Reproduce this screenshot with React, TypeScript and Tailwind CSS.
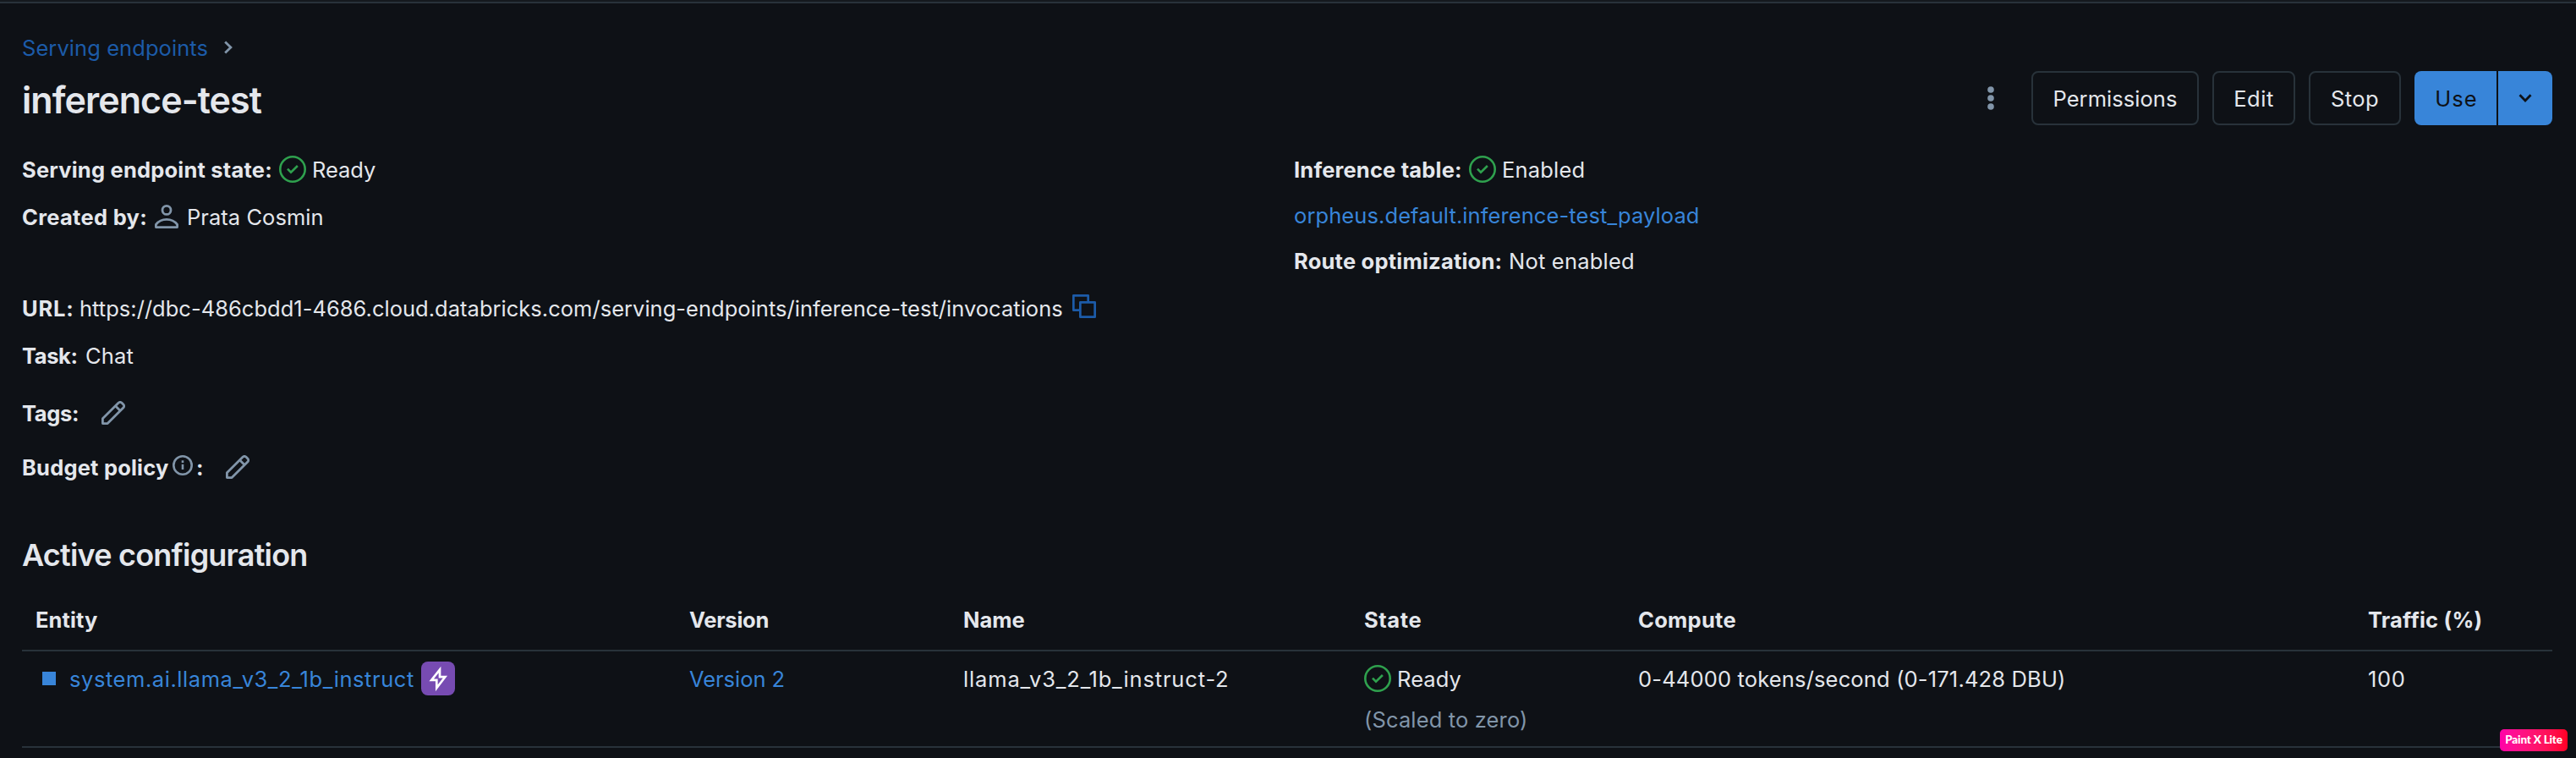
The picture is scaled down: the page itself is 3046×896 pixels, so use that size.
import type { ReactNode } from "react";

function CheckCircle() {
  return (
    <svg width="32" height="32" viewBox="0 0 32 32" fill="none" className="-mt-0.5 shrink-0 stroke-[#2fa14e]" strokeWidth="2.6">
      <circle cx="16" cy="16" r="14.7" />
      <path d="M10 15.6L14 19.6L21.9 12" />
    </svg>
  );
}

function PencilIcon() {
  return (
    <svg width="28" height="28" viewBox="0 0 28 28" fill="none" className="-mt-0.5 shrink-0 stroke-[#8195a9]" strokeWidth="2.8" strokeLinejoin="round">
      <path d="M1.4 26.6V20.8L20 2.2a2.9 2.9 0 0 1 4.1 0l1.7 1.7a2.9 2.9 0 0 1 0 4.1L7.2 26.6Z" />
      <path d="M16.4 5.8L22.2 11.6" />
    </svg>
  );
}

function UserIcon() {
  return (
    <svg width="28" height="28" viewBox="0 0 28 28" fill="none" className="-mt-0.5 shrink-0 stroke-[#8195a9]" strokeWidth="2.8" strokeLinejoin="round">
      <circle cx="14" cy="6.4" r="5" />
      <path d="M1.4 26.6V23.4C4.3 19.7 8.8 17.4 14 17.4S23.7 19.7 26.6 23.4V26.6Z" />
    </svg>
  );
}

function CopyIcon() {
  return (
    <svg width="28" height="28" viewBox="0 0 28 28" fill="none" className="-mt-1.5 ml-[11px] shrink-0 stroke-[#1c5ba8]" strokeWidth="2.7" strokeLinejoin="round">
      <path d="M9.3 18.7H1.35V1.35H18.7V9.3" />
      <path d="M9.35 9.35H26.65V26.65H9.35Z" />
    </svg>
  );
}

function InfoIcon() {
  return (
    <svg width="24" height="24" viewBox="0 0 24 24" fill="none" className="-mt-1.5 shrink-0 stroke-[#8195a9]" strokeWidth="2.6">
      <circle cx="12" cy="12" r="10.7" />
      <path d="M12 10.8V17M12 6.3V8.9" />
    </svg>
  );
}

function Row({ className, children }: { className: string; children: ReactNode }) {
  return <div className={`flex h-10 items-center ${className}`}>{children}</div>;
}

function Label({ className, children }: { className: string; children: ReactNode }) {
  return <span className={`shrink-0 font-bold ${className}`}>{children}</span>;
}

const outlineButton =
  "flex h-16 items-center justify-center rounded-lg border-2 border-[#28323a] pt-0.5";

const gridColumns = "grid grid-cols-[773px_324px_473px_325px_863px_234px]";

export default function App() {
  return (
    <div className="flex h-[896px] w-[3046px] flex-col overflow-hidden bg-[#0e1116] font-['Inter',sans-serif] text-[25.5px] leading-10 whitespace-nowrap text-[#e4e7ec]">
      <div className="h-1 shrink-0 border-b-2 border-[#28323a] bg-[#15191e]" />

      <header className="flex h-[140px] shrink-0 justify-between pr-7 pl-[26px]">
        <div>
          <nav className="mt-[33px] flex h-10 items-center text-[#1c5ba8]">
            <a className="w-[238px] tracking-[0.07px]">Serving endpoints</a>
            <svg width="12" height="16" viewBox="0 0 12 16" fill="none" className="-mt-0.5 stroke-[#8195a9]" strokeWidth="2.8">
              <path d="M2.2 1.5L8.9 8L2.2 14.5" />
            </svg>
          </nav>
          <h1 className="mt-[15px] text-[43px] leading-[52px] font-semibold tracking-[-0.93px]">inference-test</h1>
        </div>
        <div className="mt-20 flex h-16 items-center">
          <svg width="8" height="28" viewBox="0 0 8 28" className="mr-11 fill-[#8195a9]">
            <circle cx="4" cy="4" r="3.8" />
            <circle cx="4" cy="14" r="3.8" />
            <circle cx="4" cy="24" r="3.8" />
          </svg>
          <button className={`${outlineButton} mr-4 w-[198px] tracking-[0.05px]`}>Permissions</button>
          <button className={`${outlineButton} mr-4 w-[98px] tracking-[0.5px]`}>Edit</button>
          <button className={`${outlineButton} mr-4 w-[109px] tracking-[0.4px]`}>Stop</button>
          <button className="mr-0.5 flex h-16 w-[97px] items-center justify-center rounded-l-lg bg-[#3885d9] pt-0.5 pl-0.5 tracking-[1px] text-[#0e1116]">Use</button>
          <button className="flex h-16 w-16 items-center justify-center rounded-r-lg bg-[#3885d9]">
            <svg width="16" height="12" viewBox="0 0 16 12" fill="none" className="stroke-[#0e1116]" strokeWidth="2.8">
              <path d="M1.5 2.3L8 8.9L14.5 2.3" />
            </svg>
          </button>
        </div>
      </header>

      <section className="flex h-[490px] shrink-0 pl-[26px]">
        <div className="w-[1504px] pt-[37px]">
          <Row className="">
            <Label className="w-[304px] tracking-[0.2px]">Serving endpoint state:</Label>
            <CheckCircle />
            <span className="ml-[7px] tracking-[-0.05px]">Ready</span>
          </Row>
          <Row className="mt-4">
            <Label className="w-[157px] tracking-[0.3px]">Created by:</Label>
            <UserIcon />
            <span className="ml-2.5 tracking-[0.04px]">Prata Cosmin</span>
          </Row>
          <Row className="mt-[68px]">
            <Label className="w-[68px] tracking-[0.8px]">URL:</Label>
            <span className="w-[1163px] tracking-[0.02px]">
              https://dbc-486cbdd1-4686.cloud.databricks.com/serving-endpoints/inference-test/invocations
            </span>
            <CopyIcon />
          </Row>
          <Row className="mt-4">
            <Label className="w-[75px] tracking-[-0.4px]">Task:</Label>
            <span className="tracking-[0.16px]">Chat</span>
          </Row>
          <Row className="mt-7">
            <Label className="w-[94px] tracking-[-0.34px]">Tags:</Label>
            <PencilIcon />
          </Row>
          <Row className="mt-6">
            <Label className="w-[178px] tracking-[0.2px]">Budget policy</Label>
            <InfoIcon />
            <Label className="ml-1 w-[35px]">:</Label>
            <PencilIcon />
          </Row>
        </div>
        <div className="pt-[37px]">
          <Row className="">
            <Label className="w-[207px] tracking-[0.18px]">Inference table:</Label>
            <CheckCircle />
            <span className="ml-[7px] tracking-[0.19px]">Enabled</span>
          </Row>
          <Row className="mt-3.5">
            <a className="tracking-[0.09px] text-[#3885d9]">orpheus.default.inference-test_payload</a>
          </Row>
          <Row className="mt-3.5">
            <Label className="w-[254px] tracking-[0.22px]">Route optimization:</Label>
            <span className="tracking-[0.21px]">Not enabled</span>
          </Row>
        </div>
      </section>

      <section className="relative flex-1 pl-[26px]">
        <h2 className="text-[36px] leading-[44px] font-semibold tracking-[-0.79px]">Active configuration</h2>
        <div className="mt-[35px] w-[2992px]">
          <div className={`${gridColumns} h-[57px] border-b-2 border-[#28323a] font-bold`}>
            <span className="pl-4 tracking-[0.1px]">Entity</span>
            <span className="pl-4 tracking-[-0.23px]">Version</span>
            <span className="pl-4">Name</span>
            <span className="pl-[17px] tracking-[0.6px]">State</span>
            <span className="pl-4 tracking-[0.28px]">Compute</span>
            <span className="pl-4 tracking-[0.22px]">Traffic (%)</span>
          </div>
          <div className={`${gridColumns} h-[114px] border-b-2 border-[#28323a] pt-[13px]`}>
            <div className="flex h-10 items-center pl-6 text-[#3885d9]">
              <span className="-mt-0.5 size-4 bg-[#3885d9]" />
              <a className="ml-4 w-[416px] tracking-[0.56px]">system.ai.llama_v3_2_1b_instruct</a>
              <span className="-mt-0.5 size-10 rounded-lg bg-[#774bb2]">
                <svg width="40" height="40" viewBox="0 0 40 40" fill="none" className="stroke-white" strokeWidth="2.7">
                  <path d="M22 9.5L12.2 21.8H18.3V31.2L28.3 18.2H22Z" />
                </svg>
              </span>
            </div>
            <a className="pl-4 tracking-[-0.05px] text-[#3885d9]">Version 2</a>
            <span className="pl-4 tracking-[0.85px]">llama_v3_2_1b_instruct-2</span>
            <div className="pl-[17px]">
              <div className="flex h-10 items-center">
                <CheckCircle />
                <span className="ml-[7px] tracking-[0.1px]">Ready</span>
              </div>
              <div className="mt-2 tracking-[0.14px] text-[#8195a9]">(Scaled to zero)</div>
            </div>
            <span className="pl-4 tracking-[0.16px]">0-44000 tokens/second (0-171.428 DBU)</span>
            <span className="pl-4 tracking-[0.7px]">100</span>
          </div>
        </div>
        <div className="absolute right-2.5 bottom-2 flex h-[26px] w-20 items-center justify-center rounded-[5px] bg-linear-to-r from-[#ff00a8] to-[#ff0022] font-['Lato',sans-serif] text-[13.5px] leading-none font-black tracking-[-0.2px] text-white">
          Paint X Lite
        </div>
      </section>
    </div>
  );
}
